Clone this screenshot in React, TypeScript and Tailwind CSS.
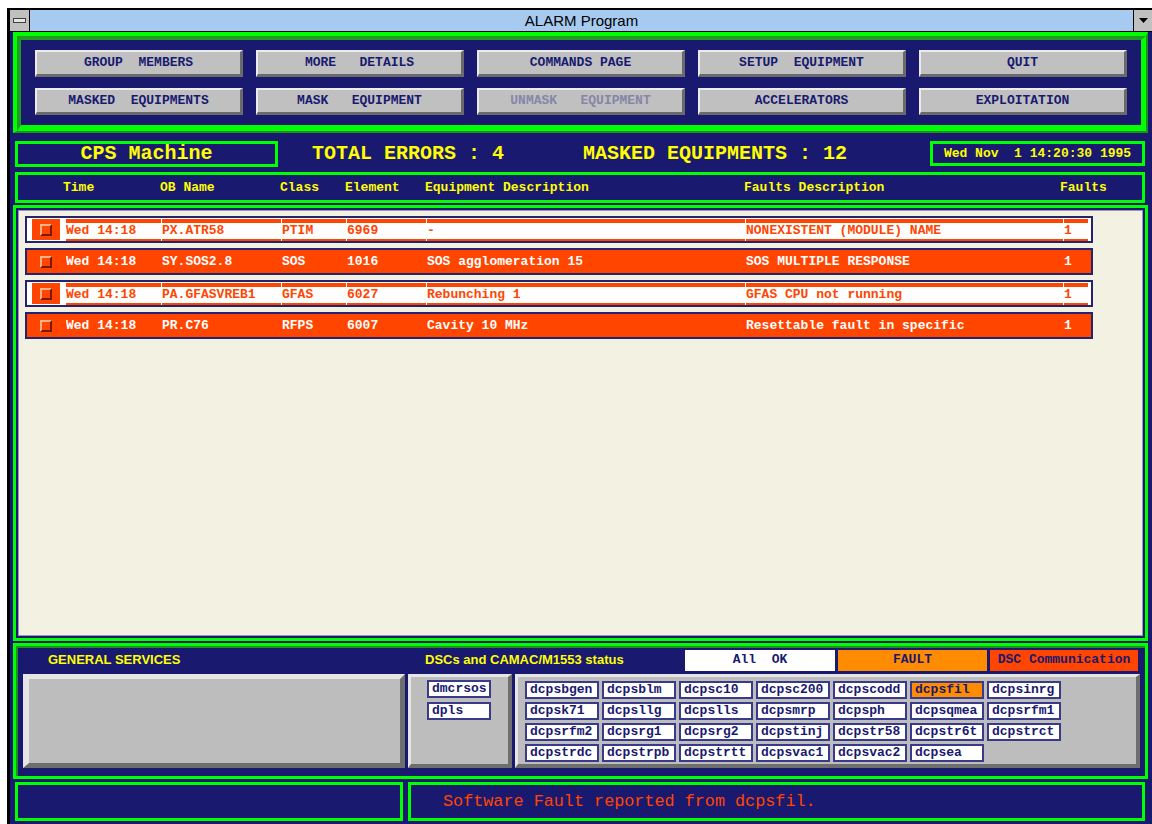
import clsx from 'clsx';

// shared font stacks
const mono = "[font-family:'Liberation_Mono','Courier_New',monospace]";
const sans = "[font-family:'Liberation_Sans',Arial,sans-serif]";

const raised =
  'bg-[#c0c0c0] border-t-2 border-l-2 border-b-[3px] border-r-[3px] border-t-[#ececec] border-l-[#ececec] border-b-[#6a6a6a] border-r-[#6a6a6a]';

const buttons = [
  { label: 'GROUP  MEMBERS' },
  { label: 'MORE   DETAILS' },
  { label: 'COMMANDS PAGE' },
  { label: 'SETUP  EQUIPMENT' },
  { label: 'QUIT' },
  { label: 'MASKED  EQUIPMENTS' },
  { label: 'MASK   EQUIPMENT' },
  { label: 'UNMASK   EQUIPMENT', disabled: true },
  { label: 'ACCELERATORS' },
  { label: 'EXPLOITATION' },
];

type Alarm = {
  time: string;
  ob: string;
  cls: string;
  el: string;
  equip: string;
  fault: string;
  count: string;
  hot: boolean;
};

const alarms: Alarm[] = [
  { time: 'Wed 14:18', ob: 'PX.ATR58', cls: 'PTIM', el: '6969', equip: '-', fault: 'NONEXISTENT (MODULE) NAME', count: '1', hot: false },
  { time: 'Wed 14:18', ob: 'SY.SOS2.8', cls: 'SOS', el: '1016', equip: 'SOS agglomeration 15', fault: 'SOS MULTIPLE RESPONSE', count: '1', hot: true },
  { time: 'Wed 14:18', ob: 'PA.GFASVREB1', cls: 'GFAS', el: '6027', equip: 'Rebunching 1', fault: 'GFAS CPU not running', count: '1', hot: false },
  { time: 'Wed 14:18', ob: 'PR.C76', cls: 'RFPS', el: '6007', equip: 'Cavity 10 MHz', fault: 'Resettable fault in specific', count: '1', hot: true },
];

const cellWidths = ['w-[95px]', 'w-[119px]', 'w-[64px]', 'w-[79px]', 'w-[318px]', 'w-[317px]', 'w-[24px]'];

const headers = [
  { label: 'Time', w: 'w-[97px]' },
  { label: 'OB Name', w: 'w-[120px]' },
  { label: 'Class', w: 'w-[65px]' },
  { label: 'Element', w: 'w-[80px]' },
  { label: 'Equipment Description', w: 'w-[319px]' },
  { label: 'Faults Description', w: 'w-[316px]' },
  { label: 'Faults', w: 'w-[60px]' },
];

const dscs = [
  'dcpsbgen', 'dcpsblm', 'dcpsc10', 'dcpsc200', 'dcpscodd', 'dcpsfil', 'dcpsinrg',
  'dcpsk71', 'dcpsllg', 'dcpslls', 'dcpsmrp', 'dcpsph', 'dcpsqmea', 'dcpsrfm1',
  'dcpsrfm2', 'dcpsrg1', 'dcpsrg2', 'dcpstinj', 'dcpstr58', 'dcpstr6t', 'dcpstrct',
  'dcpstrdc', 'dcpstrpb', 'dcpstrtt', 'dcpsvac1', 'dcpsvac2', 'dcpsea',
];
const faulty = ['dcpsfil'];

function AlarmRow({ a }: { a: Alarm }) {
  const cells = [a.time, a.ob, a.cls, a.el, a.equip, a.fault, a.count];
  return (
    <div
      className={clsx(
        'w-[1068px] h-[27px] border-2 border-[#24246e] flex',
        a.hot ? 'bg-[#ff4500] text-white' : 'bg-white text-[#ff4500]'
      )}
    >
      <div className="ml-[5px] w-[28px] my-[1px] bg-[#ff4500] flex items-center justify-center">
        <div className="w-[12px] h-[12px] bg-[#ff4500] border-2 border-t-[#ffb08c] border-l-[#ffb08c] border-b-[#7a1800] border-r-[#7a1800]" />
      </div>
      <div className="ml-[6px] flex">
        {cells.map((c, i) => (
          <div
            key={i}
            className={clsx(
              cellWidths[i],
              'mr-[1px] flex items-center whitespace-pre overflow-hidden',
              !a.hot && 'mt-[1px] border-t-[4px] border-b-[2px] border-[#ff4500]'
            )}
          >
            {c}
          </div>
        ))}
      </div>
    </div>
  );
}

export default function App() {
  return (
    <div className={clsx('w-[1152px] h-[824px] bg-white pl-[7px] pt-[8px] overflow-hidden', mono)}>
      <div className="h-full flex flex-col border-l-[3px] border-t-[2px] border-black bg-[#191970]">
        {/* title bar */}
        <div className="h-[22px] flex bg-[#a6caf0] border-b border-black">
          <div className="w-[20px] bg-[#c0c0c0] border-r border-black flex items-center justify-center">
            <div className="w-[13px] h-[5px] bg-[#e4e4e4] border border-[#404040]" />
          </div>
          <div className={clsx('flex-1 text-center text-[15px] leading-[21px] text-black', sans)}>ALARM Program</div>
          <div className="w-[19px] bg-[#c0c0c0] border-l border-black flex items-center justify-center">
            <svg width="9" height="6" viewBox="0 0 9 6">
              <path d="M0 0h9L4.5 5z" fill="#000" />
            </svg>
          </div>
        </div>

        <div className="flex-1 flex flex-col pl-[3px] pr-[4px]">
          {/* command buttons */}
          <div className="h-[101px] border-t-[4px] border-l-[4px] border-r-[2px] border-b-[2px] border-t-[#00ff00] border-l-[#00ff00] border-r-[#1f8f1f] border-b-[#1f8f1f]">
            <div className="h-full border-t-[4px] border-l-[4px] border-r-[5px] border-b-[6px] border-t-[#229922] border-l-[#229922] border-r-[#00ff00] border-b-[#00ff00] pl-[14px] pt-[10px]">
              <div className="grid grid-cols-[repeat(5,208px)] gap-x-[13px] gap-y-[11px]">
                {buttons.map((b) => (
                  <div
                    key={b.label}
                    className={clsx(
                      raised,
                      'h-[27px] flex items-center justify-center text-[13px] font-bold whitespace-pre',
                      b.disabled ? 'text-[#8686a8]' : 'text-[#191970]'
                    )}
                  >
                    {b.label}
                  </div>
                ))}
              </div>
            </div>
          </div>

          {/* machine and counters */}
          <div className="mt-[7px] h-[27px] flex items-center text-[#ffff00] font-bold">
            <div className="ml-[2px] w-[263px] h-[26px] border-[3px] border-[#00ff00] flex items-center justify-center text-[20px]">
              CPS Machine
            </div>
            <div className="ml-[34px] text-[20px] whitespace-pre">TOTAL ERRORS : 4</div>
            <div className="ml-[79px] text-[20px] whitespace-pre">MASKED EQUIPMENTS : 12</div>
            <div className="ml-auto mr-[3px] w-[215px] h-[25px] border-[3px] border-[#00ff00] flex items-center justify-center text-[13px] whitespace-pre">
              Wed Nov  1 14:20:30 1995
            </div>
          </div>

          {/* column headers */}
          <div className="mt-[5px] ml-[2px] mr-[3px] h-[31px] border-[3px] border-[#00ff00] flex items-center pl-[45px] text-[13px] font-bold text-[#ffff00]">
            {headers.map((h) => (
              <div key={h.label} className={h.w}>
                {h.label}
              </div>
            ))}
          </div>

          {/* alarm list */}
          <div className="mt-[2px] h-[436px] border-[3px] border-[#00ff00]">
            <div className="h-full border-2 border-[#191970]">
              <div className="h-full border border-[#9898b4] bg-[#f3f2e2] pl-[6px] pt-[5px] flex flex-col gap-[5px] text-[13px] font-bold">
                {alarms.map((a) => (
                  <AlarmRow key={a.ob} a={a} />
                ))}
              </div>
            </div>
          </div>

          {/* services status */}
          <div className="mt-[2px] h-[136px] border-[3px] border-[#00ff00]">
            <div className="h-full border-t-2 border-l-2 border-[#1f8f1f] flex flex-col">
              <div className="mt-[1px] h-[22px] flex items-center">
                <div className={clsx('w-[407px] pl-[30px] text-[13px] font-bold text-[#ffff00]', sans)}>GENERAL SERVICES</div>
                <div className={clsx('text-[13px] font-bold text-[#ffff00]', sans)}>DSCs and CAMAC/M1553 status</div>
                <div className="ml-auto mr-[7px] flex gap-[3px] text-[13px] font-bold text-[#191970]">
                  <div className="w-[150px] h-[21px] bg-white flex items-center justify-center whitespace-pre">All  OK</div>
                  <div className="w-[149px] h-[21px] bg-[#ff8c00] flex items-center justify-center">FAULT</div>
                  <div className="w-[148px] h-[21px] bg-[#ff4500] flex items-center justify-center">DSC Communication</div>
                </div>
              </div>
              <div className="mt-[3px] h-[94px] flex text-[13px] font-bold text-[#191970]">
                <div className="ml-[5px] w-[382px] bg-[#bdbdbd] border-t-[5px] border-l-[6px] border-b-[5px] border-r-[5px] border-t-[#e6e6e6] border-l-[#e6e6e6] border-b-[#6e6e6e] border-r-[#6e6e6e]" />
                <div className="ml-[3px] w-[104px] bg-[#bdbdbd] border-t-[3px] border-l-[3px] border-b-[4px] border-r-[4px] border-t-[#e6e6e6] border-l-[#e6e6e6] border-b-[#6e6e6e] border-r-[#6e6e6e] pl-[16px] pt-[3px] flex flex-col gap-[4px]">
                  {['dmcrsos', 'dpls'].map((d) => (
                    <div key={d} className="w-[64px] h-[18px] bg-white border-2 border-[#3a3a8a] pl-[3px] leading-[14px]">
                      {d}
                    </div>
                  ))}
                </div>
                <div className="ml-[3px] w-[625px] bg-[#bdbdbd] border-t-[3px] border-l-[3px] border-b-[4px] border-r-[4px] border-t-[#e6e6e6] border-l-[#e6e6e6] border-b-[#6e6e6e] border-r-[#6e6e6e] pl-[7px] pt-[4px]">
                  <div className="grid grid-cols-[repeat(7,74px)] gap-[3px]">
                    {dscs.map((d) => (
                      <div
                        key={d}
                        className={clsx(
                          'h-[18px] border-2 border-[#3a3a8a] pl-[3px] leading-[14px]',
                          faulty.includes(d) ? 'bg-[#ff8c00]' : 'bg-white'
                        )}
                      >
                        {d}
                      </div>
                    ))}
                  </div>
                </div>
              </div>
            </div>
          </div>

          {/* message line */}
          <div className="mt-[3px] h-[39px] flex">
            <div className="ml-[2px] w-[388px] border-[3px] border-[#00ff00]" />
            <div className="ml-[5px] mr-[3px] flex-1 border-[3px] border-[#00ff00] flex items-center pl-[32px] text-[16.8px] text-[#ff4500]">
              Software Fault reported from dcpsfil.
            </div>
          </div>
        </div>
      </div>
    </div>
  );
}
